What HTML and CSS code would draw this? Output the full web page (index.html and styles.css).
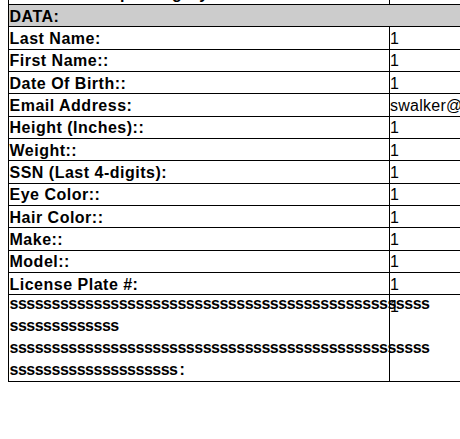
FILE: index.html
```html
<!DOCTYPE html>
<html>
<head>
<meta charset="utf-8">
<link rel="stylesheet" href="styles.css">
</head>
<body>
<div class="sheet">
  <div class="cell label">Incident Group Category</div><div class="cell value"></div>
  <div class="cell band">DATA:</div>
  <div class="cell label">Last Name:</div><div class="cell value">1</div>
  <div class="cell label">First Name::</div><div class="cell value">1</div>
  <div class="cell label">Date Of Birth::</div><div class="cell value">1</div>
  <div class="cell label">Email Address:</div><div class="cell value">swalker@example.com</div>
  <div class="cell label">Height (Inches)::</div><div class="cell value">1</div>
  <div class="cell label">Weight::</div><div class="cell value">1</div>
  <div class="cell label">SSN (Last 4-digits):</div><div class="cell value">1</div>
  <div class="cell label">Eye Color::</div><div class="cell value">1</div>
  <div class="cell label">Hair Color::</div><div class="cell value">1</div>
  <div class="cell label">Make::</div><div class="cell value">1</div>
  <div class="cell label">Model::</div><div class="cell value">1</div>
  <div class="cell label">License Plate #:</div><div class="cell value">1</div>
  <div class="cell label long"><div class="lines">ssssssssssssssssssssssssssssssssssssssssssssssssss<br>sssssssssssss<br>ssssssssssssssssssssssssssssssssssssssssssssssssss<br>ssssssssssssssssssss<span class="colon">:</span></div></div><div class="cell value">1</div>
</div>
</body>
</html>
```

FILE: styles.css
```css
html, body {
  margin: 0;
  padding: 0;
  overflow: hidden;
  background: #fff;
}

.sheet {
  display: grid;
  grid-template-columns: 381px 200px;
  grid-template-rows: repeat(14, 22.333px) 87px;
  margin: -17.333px 0 0 8px;
  border-left: 1px solid #000;
  font-family: "Liberation Sans", Arial, sans-serif;
  font-size: 16px;
  color: #000;
}

.cell {
  box-sizing: border-box;
  border-bottom: 1px solid #000;
  line-height: 21.333px;
  padding-top: 0.6px;
  white-space: nowrap;
  overflow: visible;
}

.label {
  font-weight: bold;
  letter-spacing: 0.5px;
  border-right: 1px solid #000;
  padding-left: 0.5px;
}

.value {
  font-weight: normal;
  letter-spacing: 0.25px;
  overflow: hidden;
}

.band {
  grid-column: 1 / -1;
  background: #cccccc;
  font-weight: bold;
  letter-spacing: 0.5px;
  padding-left: 0.5px;
}

.long .lines {
  line-height: 22px;
  margin-top: -2.8px;
  letter-spacing: -0.5px;
}

.long .colon {
  margin-left: 2px;
}
```
